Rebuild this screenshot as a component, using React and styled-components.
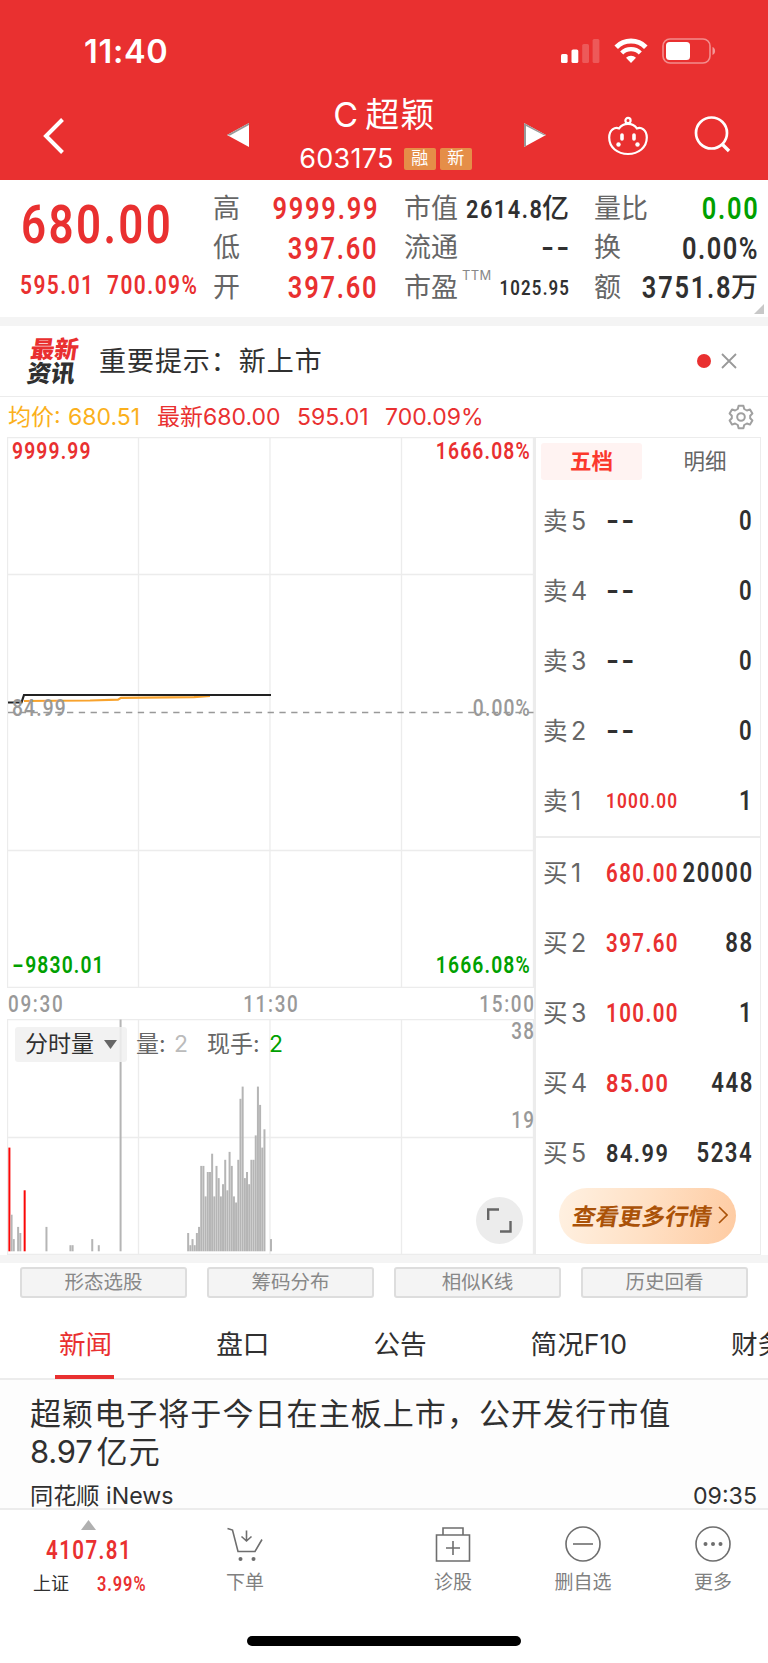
import React from 'react'
import styled, { createGlobalStyle, css } from 'styled-components'

const RED = '#e93030'
const GREEN = '#00a000'
const DARK = '#303030'
const GREY = '#666'
const LINE = '#ececec'

const GlobalStyle = createGlobalStyle`
  * {
    box-sizing: border-box;
  }
  body {
    margin: 0;
    background: #fff;
    font-family: Inter, 'Noto Sans CJK SC', sans-serif;
    color: ${DARK};
  }
`

const Screen = styled.div`
  width: 768px;
  height: 1663px;
  overflow: hidden;
  display: flex;
  flex-direction: column;
  background: #fff;
`

// condensed tabular figures, anchored to whichever side they align to
const Num = styled.span`
  display: inline-block;
  flex: none;
  font-family: Roboto, sans-serif;
  font-weight: ${p => p.$weight || 600};
  font-size: ${p => p.$size}px;
  line-height: 1;
  letter-spacing: ${p => p.$ls === undefined ? 0.07 : p.$ls}em;
  margin-right: ${p => p.$right ? -(p.$ls === undefined ? 0.07 : p.$ls) * 0.82 : 0}em;
  color: ${p => p.$color || DARK};
  white-space: nowrap;
  transform: scaleX(${p => p.$scale || 0.82});
  transform-origin: ${p => p.$right ? 'right' : 'left'} center;
`

const Minus = styled.span`
  display: inline-block;
  transform: scaleX(1.7);
  transform-origin: left center;
  margin-right: 6px;
`

/* header */

const Header = styled.header`
  height: 180px;
  flex: none;
  background: ${RED};
  color: #fff;
`

const StatusBar = styled.div`
  height: 92px;
  padding: 32px 52px 0 84px;
  display: flex;
  justify-content: space-between;
`

const Clock = styled.div`
  font-size: 32.5px;
  line-height: 39px;
  font-weight: 600;
  letter-spacing: 0.7px;
`

const StatusIcons = styled.div`
  display: flex;
  padding-top: 6px;
  gap: 14px;
`

const NavBar = styled.div`
  height: 88px;
  display: grid;
  grid-template-columns: 227px 319px 222px;
`

const NavLeft = styled.div`
  display: flex;
  padding: 26px 0 0 43px;
`

const NavCenter = styled.div`
  display: flex;
  justify-content: space-between;
`

const NavRight = styled.div`
  display: flex;
  padding: 24px 0 0 61px;
  gap: 45px;
`

const Arrow = styled.svg`
  margin-top: 30px;
  flex: none;
`

const Title = styled.div`
  width: 190px;
  text-align: center;
`

const StockName = styled.div`
  padding-top: 1px;
  margin-left: -4px;
  font-size: 34px;
  line-height: 44px;
  letter-spacing: 1.3px;
  word-spacing: -5px;
  white-space: nowrap;
`

const StockCode = styled.div`
  display: flex;
  align-items: center;
  justify-content: center;
  height: 45px;
  margin-top: -1px;
  margin-left: -2px;
  font-size: 27px;
  letter-spacing: 0.3px;
  gap: 4px;
`

const Tag = styled.span`
  width: 32px;
  height: 22px;
  border-radius: 2px;
  background: #e58e48;
  font-size: 17px;
  line-height: 21px;
  text-align: center;
  letter-spacing: 0;
  &:first-of-type {
    margin-left: 6px;
  }
`

/* quote */

const Quote = styled.section`
  position: relative;
  height: 137px;
  flex: none;
  display: flex;
`

const QuoteMain = styled.div`
  width: 192px;
  margin-left: 21px;
  padding-top: 14px;
`

const LastPrice = styled.div`
  height: 62px;
  display: flex;
  align-items: center;
  line-height: 1;
`

const Change = styled.div`
  display: grid;
  grid-template-columns: 87px 1fr;
  height: 60px;
  align-items: center;
  margin-left: -1px;
`

const QuoteCol = styled.div`
  width: ${p => p.$width}px;
  margin-right: ${p => p.$gap}px;
  padding-top: 9px;
`

const QuoteRow = styled.div`
  height: 39.5px;
  display: flex;
  align-items: center;
  justify-content: space-between;
`

const QuoteLabel = styled.span`
  position: relative;
  font-size: 27px;
  line-height: 38px;
  white-space: nowrap;
  color: ${GREY};
  sup {
    position: absolute;
    left: 58px;
    top: -8px;
    font-size: 13px;
    line-height: 29px;
    letter-spacing: 0.3px;
    color: #888;
  }
`

const QuoteValue = styled.span`
  display: flex;
  flex: 1;
  min-width: 0;
  align-items: center;
  justify-content: flex-end;
  height: 38px;
`

const Unit = styled.span`
  font-size: 27px;
  line-height: 38px;
  font-weight: 500;
`

const Dash = styled.span`
  display: inline-block;
  font-family: Roboto, sans-serif;
  font-weight: 700;
  font-size: 27px;
  line-height: 1;
  letter-spacing: 1.6px;
  margin-right: -2px;
  transform: scaleX(1.25);
  transform-origin: ${p => p.$right ? 'right' : 'left'} center;
`

const Corner = styled.svg`
  position: absolute;
  right: 4px;
  bottom: 3px;
`

const Band = styled.div`
  height: ${p => p.$height}px;
  flex: none;
  background: #f4f4f4;
`

/* notice */

const Notice = styled.section`
  height: 71px;
  flex: none;
  display: flex;
  align-items: center;
  padding: 0 31px 0 29px;
  border-bottom: 1px solid ${LINE};
`

const NoticeLogo = styled.div`
  width: 50px;
  font-size: 24px;
  line-height: 23.5px;
  font-weight: 900;
  transform: skewX(-8deg);
  b {
    display: block;
    font-weight: 900;
    color: ${RED};
  }
`

const NoticeText = styled.div`
  flex: 1;
  margin-left: 20px;
  padding-bottom: 4px;
  font-size: 27px;
  letter-spacing: 0.95px;
`

const Dot = styled.span`
  width: 14px;
  height: 14px;
  border-radius: 50%;
  background: ${RED};
  margin-right: 10px;
`

/* chart */

const AvgRow = styled.div`
  height: 40px;
  flex: none;
  display: flex;
  align-items: center;
  padding: 0 14px 0 8px;
  font-size: 23px;
  line-height: 40px;
  color: ${RED};
  white-space: nowrap;
  span {
    width: 140px;
  }
  span:nth-child(1) {
    width: 149px;
    color: #fbb01c;
    word-spacing: 1px;
  }
  span:nth-child(3) {
    width: 88px;
  }
  svg {
    margin-left: auto;
  }
`

const Market = styled.section`
  height: 818px;
  flex: none;
  display: grid;
  grid-template-columns: 527px 227px;
  padding-left: 7px;
`

const PriceChart = styled.div`
  position: relative;
  height: 551px;
  svg {
    display: block;
  }
`

const Axis = styled.div`
  height: 31px;
  display: grid;
  grid-template-columns: 1fr 1fr 1fr;
  align-items: center;
  padding: 2px 0 0 1px;
  > :nth-child(2) {
    justify-self: center;
    transform-origin: center;
  }
  > :nth-child(3) {
    justify-self: end;
  }
`

const VolumeChart = styled.div`
  position: relative;
  height: 236px;
  svg {
    display: block;
  }
`

const Mark = styled.div`
  position: absolute;
  line-height: 1;
  top: ${p => p.$top}px;
  ${p => p.$end !== undefined ? css`right: ${p.$end}px;` : css`left: 5px;`}
`

const VolumeHead = styled.div`
  position: absolute;
  left: 8px;
  top: 8px;
  height: 35px;
  display: flex;
  align-items: center;
  font-size: 23px;
  line-height: 30px;
  color: ${GREY};
  white-space: nowrap;
`

const Picker = styled.div`
  width: 112px;
  height: 35px;
  display: flex;
  align-items: center;
  justify-content: space-between;
  padding: 0 10px 2px 10px;
  margin-right: 9px;
  border-radius: 3px;
  background: rgba(240, 240, 240, 0.86);
  color: ${DARK};
  svg {
    margin-top: 2px;
  }
`

const Reading = styled.span`
  width: ${p => p.$width}px;
  padding-bottom: 2px;
  color: ${p => p.$color || GREY};
`

const Expand = styled.div`
  position: absolute;
  right: 11px;
  bottom: 11px;
  width: 47px;
  height: 47px;
  border-radius: 50%;
  background: #ececec;
  display: grid;
  place-items: center;
`

/* order book */

const Book = styled.div`
  border: 1px solid ${LINE};
  border-left-width: 2px;
  height: 818px;
`

const BookTabs = styled.div`
  height: 48px;
  padding: 5px 2px 6px 5px;
  display: grid;
  grid-template-columns: 101px 1fr;
  column-gap: 10px;
`

const BookTab = styled.div`
  border-radius: 3px;
  text-align: center;
  font-size: 21.5px;
  line-height: 36px;
  font-weight: ${p => p.$active ? 700 : 400};
  color: ${p => p.$active ? '#fb382c' : GREY};
  background: ${p => p.$active ? '#fff3f2' : 'none'};
`

const Side = styled.div`
  ${p => p.$ruled && css`border-bottom: 2px solid ${LINE};`}
`

const BookRow = styled.div`
  height: 70px;
  display: grid;
  grid-template-columns: 28px 35px minmax(0, 1fr) 76px;
  align-items: center;
  padding: 0 8px 0 7px;
  > :last-child {
    justify-self: end;
  }
`

const SideName = styled.span`
  font-size: 24.5px;
  line-height: 36px;
  margin-top: -1px;
  color: ${GREY};
`

const Level = styled.span`
  font-size: 25px;
  color: ${GREY};
`

const MoreQuotes = styled.div`
  width: 177px;
  height: 56px;
  margin: 0 auto 0 23px;
  border-radius: 28px;
  background: linear-gradient(100deg, #fff1e2, #ffe0c4 50%, #fecba2);
  display: flex;
  align-items: center;
  padding: 0 0 2px 14px;
  font-size: 23.2px;
  font-weight: 700;
  color: #aa5208;
  em {
    font-style: normal;
    transform: skewX(-10deg);
    margin-right: 6px;
    white-space: nowrap;
  }
`

/* lower part */

const Tools = styled.div`
  height: 42px;
  flex: none;
  padding: 4px 20px 8px;
  display: grid;
  grid-template-columns: repeat(4, 1fr);
  column-gap: 20px;
`

const Tool = styled.div`
  border: 2px solid #ddd;
  border-radius: 3px;
  background: #f4f4f4;
  text-align: center;
  font-size: 19.5px;
  line-height: 27px;
  color: #888;
`

const Tabs = styled.nav`
  height: 75px;
  flex: none;
  display: flex;
  gap: 104px;
  padding-left: 59px;
  border-bottom: 2px solid ${LINE};
`

const Tab = styled.div`
  position: relative;
  flex: none;
  font-size: 26.6px;
  line-height: 78px;
  height: 73px;
  color: ${p => p.$active ? RED : DARK};
  ${p => p.$active && css`
    &::after {
      content: '';
      position: absolute;
      left: -4px;
      right: -2px;
      bottom: -1px;
      height: 4px;
      background: ${RED};
    }
  `}
`

const News = styled.article`
  height: 128px;
  flex: none;
  padding: 15px 11px 0 30px;
  background: #fdfdfd;
`

const Headline = styled.div`
  font-size: 31px;
  line-height: 38px;
  letter-spacing: 1.07px;
  height: 80px;
  white-space: nowrap;
`

const Amount = styled.span`
  letter-spacing: -0.2px;
  margin-right: 4px;
`

const NewsMeta = styled.div`
  display: flex;
  justify-content: space-between;
  font-size: 23.2px;
  line-height: 44px;
  margin-top: -1px;
  height: 34px;
`

const BottomBar = styled.footer`
  height: 120px;
  flex: none;
  border-top: 2px solid ${LINE};
  background: #fff;
  display: grid;
  grid-template-columns: 177px 136px 75px 130px 130px 130px;
`

const IndexCell = styled.div`
  display: flex;
  flex-direction: column;
  padding-left: 33px;
  padding-top: 10px;
  > svg {
    margin-left: 48px;
  }
`

const IndexValue = styled.div`
  height: 39px;
  padding: 2px 0 0 13px;
  display: flex;
  align-items: center;
`

const IndexName = styled.div`
  display: grid;
  grid-template-columns: 64px auto;
  align-items: center;
  font-size: 18px;
  line-height: 28px;
  margin-top: 1px;
`

const Action = styled.div`
  display: flex;
  flex-direction: column;
  align-items: center;
  padding-top: 16px;
  font-size: 19px;
  line-height: 26px;
  color: #808080;
  svg {
    margin-bottom: 8px;
  }
`

const HomeIndicator = styled.div`
  width: 274px;
  height: 10px;
  margin: 8px auto 0;
  border-radius: 5px;
  background: #000;
`

const sells = [
  { level: 5, qty: 0 },
  { level: 4, qty: 0 },
  { level: 3, qty: 0 },
  { level: 2, qty: 0 },
  { level: 1, price: '1000.00', qty: 1, size: 21 }
]

const buys = [
  { level: 1, price: '680.00', qty: 20000 },
  { level: 2, price: '397.60', qty: 88 },
  { level: 3, price: '100.00', qty: 1 },
  { level: 4, price: '85.00', qty: 448, size: 26.5 },
  { level: 5, price: '84.99', qty: 5234, size: 26.5, color: DARK }
]

// [minute since open, lots]
const volumes = [
  [0, 17], [1, 6], [2, 2], [4, 4], [5, 3], [7, 10], [17, 4], [28, 1], [29, 1], [38, 2], [41, 1], [51, 38],
  [82, 3], [83, 1], [84, 2], [85, 1], [86, 3], [87, 4], [88, 14], [89, 14], [90, 9], [91, 13], [92, 13],
  [93, 16], [94, 9], [95, 14], [96, 12], [97, 9], [98, 11], [99, 15], [100, 10], [101, 16.3], [102, 14],
  [103, 9], [104, 8], [105, 15], [106, 25], [107, 27], [108, 12], [109, 13], [110, 11], [111, 15],
  [112, 15], [113, 19], [114, 27], [115, 24], [116, 17], [117, 20], [120, 2]
]
const risingMinutes = [0, 7]

const Signal = () => (
  <svg width="39" height="25" viewBox="0 0 39 25" fill="#fff">
    <rect x="0" y="16" width="6.6" height="9" rx="1.6" />
    <rect x="10.5" y="11.5" width="6.8" height="13.5" rx="1.6" />
    <rect x="21.2" y="6" width="6.8" height="19" rx="1.6" opacity=".2" />
    <rect x="31.6" y="1" width="6.8" height="24" rx="1.6" opacity=".2" />
  </svg>
)

const Wifi = () => (
  <svg width="34" height="25" viewBox="0 0 34 25" fill="none" stroke="#fff">
    <path d="M2.2 9.2a21 21 0 0 1 29.6 0" strokeWidth="5" />
    <path d="M7.7 15a13.2 13.2 0 0 1 18.6 0" strokeWidth="4.4" />
    <path d="M17 25l-5-5.2a7.2 7.2 0 0 1 10 0z" fill="#fff" stroke="none" />
  </svg>
)

const Battery = () => (
  <svg width="54" height="26" viewBox="0 0 54 26" fill="none">
    <rect x="1" y="1" width="47" height="24" rx="7" stroke="#fff" strokeWidth="1.6" opacity=".45" />
    <rect x="4" y="4" width="24" height="18" rx="3.5" fill="#fff" />
    <path d="M50.5 9v8c1.6-.6 2.6-2.2 2.6-4s-1-3.4-2.6-4z" fill="#fff" opacity=".5" />
  </svg>
)

const Robot = () => (
  <svg width="42" height="40" viewBox="0 0 42 40" fill="none" stroke="#fff" strokeWidth="2.2">
    <circle cx="21" cy="4.5" r="2.6" />
    <path d="M21 7.8c-3.6 0-6.800 1.600-8.900 4.600C8 10.600 2.200 13.500 2.200 21.600 2.200 31.500 10.500 38 21 38s18.800-6.500 18.800-16.400c0-8.100-5.800-11-9.900-9.200C27.800 9.400 24.600 7.800 21 7.800z" />
    <path d="M15 19v4M27 19v4" strokeWidth="3.6" strokeLinecap="round" />
    <circle cx="11.500" cy="28.5" r="2.2" fill="#fff" stroke="none" />
    <circle cx="30.500" cy="28.5" r="2.2" fill="#fff" stroke="none" />
  </svg>
)

const Search = () => (
  <svg width="37" height="38" viewBox="0 0 37 38" fill="none" stroke="#fff" strokeWidth="2.7">
    <circle cx="17.5" cy="17" r="15.5" />
    <path d="M28 28l7 7" strokeWidth="3.4" />
  </svg>
)

const Gear = () => (
  <svg width="26" height="26" viewBox="0 0 26 26" fill="none" stroke="#a0a0a0" strokeWidth="2" strokeLinejoin="round">
    <path d="M10.6 1.700h4.800l.8 3.300 2.700 1.500 3.100-1.100 2.400 4.100-2.200 2.200v2.600l2.200 2.200-2.400 4.100-3.100-1.100-2.700 1.500-.8 3.300h-4.800l-.8-3.300-2.700-1.500-3.100 1.100-2.400-4.100 2.200-2.200v-2.600l-2.200-2.200 2.400-4.100 3.100 1.100 2.700-1.500z" />
    <circle cx="13" cy="13" r="3.8" />
  </svg>
)

const grid = [0.5, 131.5, 263, 394.5, 526.5]

const PriceLines = () => (
  <svg width="527" height="551" viewBox="0 0 527 551" fill="none">
    <g stroke={LINE} strokeWidth="1.3">
      {grid.map(x => <path key={x} d={`M${x} 0V551`} />)}
      {[0.5, 137.5, 413.5, 550.3].map(y => <path key={y} d={`M0 ${y}H527`} />)}
    </g>
    <path d="M1 275.500H527" stroke="#999" strokeWidth="1.3" strokeDasharray="6.3 5.5" />
    <path d="M17 264l66-.5 28-.9 3-1.800 73-.6 16-1.200" stroke="#f8a32e" strokeWidth="2.2" />
    <path d="M1 265.500h13.500l2.500-7.500h247" stroke="#222" strokeWidth="2.2" />
  </svg>
)

const VolumeBars = () => (
  <svg width="527" height="236" viewBox="0 0 527 236" fill="none">
    <g stroke={LINE} strokeWidth="1.3">
      {grid.map(x => <path key={x} d={`M${x} 0V236`} />)}
      {[0.5, 118.5, 235.3].map(y => <path key={y} d={`M0 ${y}H527`} />)}
    </g>
    {volumes.map(([minute, lots]) => (
      <rect
        key={minute}
        x={1.4 + minute * 2.18}
        y={232.3 - lots * 6.1}
        width="2"
        height={lots * 6.1}
        fill={risingMinutes.includes(minute) ? '#fa0808' : '#b5b5b5'}
      />
    ))}
  </svg>
)

const BookLine = ({ side, level, price, qty, size = 25, color = RED }) => (
  <BookRow>
    <SideName>{side}</SideName>
    <Level>{level}</Level>
    {price
      ? <Num $size={size} $color={color}>{price}</Num>
      : <Dash>--</Dash>}
    <Num $size={27} $right>{qty}</Num>
  </BookRow>
)

const App = () => (
  <Screen>
    <GlobalStyle />
    <Header>
      <StatusBar>
        <Clock>11:40</Clock>
        <StatusIcons>
          <Signal />
          <Wifi />
          <Battery />
        </StatusIcons>
      </StatusBar>
      <NavBar>
        <NavLeft>
          <svg width="22" height="36" viewBox="0 0 22 36" fill="none" stroke="#fff" strokeWidth="4">
            <path d="M19.500 1.500L3 18l16.500 16.500" />
          </svg>
        </NavLeft>
        <NavCenter>
          <Arrow width="23" height="26" viewBox="0 0 23 26">
            <path d="M0 13L22 1v24z" fill="#fff" />
            <path d="M0 13L22 1v2L3 13.500z" fill="#999" />
          </Arrow>
          <Title>
            <StockName>C 超颖</StockName>
            <StockCode>
              603175
              <Tag>融</Tag>
              <Tag>新</Tag>
            </StockCode>
          </Title>
          <Arrow width="23" height="26" viewBox="0 0 23 26">
            <path d="M1 1l22 12L1 25z" fill="#fff" />
            <path d="M1 1l22 12-2 .3L3 4v20l-2 1z" fill="#999" />
          </Arrow>
        </NavCenter>
        <NavRight>
          <Robot />
          <Search />
        </NavRight>
      </NavBar>
    </Header>

    <Quote>
      <QuoteMain>
        <LastPrice>
          <Num $size={53.5} $color={RED} $ls={0.055}>680.00</Num>
        </LastPrice>
        <Change>
          <Num $size={25.5} $color={RED}>595.01</Num>
          <Num $size={25.5} $color={RED}>700.09%</Num>
        </Change>
      </QuoteMain>
      <QuoteCol $width={164} $gap={27}>
        <QuoteRow><QuoteLabel>高</QuoteLabel><Num $size={31} $color={RED} $right>9999.99</Num></QuoteRow>
        <QuoteRow><QuoteLabel>低</QuoteLabel><Num $size={31} $color={RED} $right>397.60</Num></QuoteRow>
        <QuoteRow><QuoteLabel>开</QuoteLabel><Num $size={31} $color={RED} $right>397.60</Num></QuoteRow>
      </QuoteCol>
      <QuoteCol $width={165} $gap={25}>
        <QuoteRow>
          <QuoteLabel>市值</QuoteLabel>
          <QuoteValue><Num $size={26.5} $right>2614.8</Num><Unit>亿</Unit></QuoteValue>
        </QuoteRow>
        <QuoteRow><QuoteLabel>流通</QuoteLabel><Dash $right>--</Dash></QuoteRow>
        <QuoteRow>
          <QuoteLabel>市盈<sup>TTM</sup></QuoteLabel>
          <Num $size={20.5} $right>1025.95</Num>
        </QuoteRow>
      </QuoteCol>
      <QuoteCol $width={164} $gap={0}>
        <QuoteRow><QuoteLabel>量比</QuoteLabel><Num $size={31} $color={GREEN} $right>0.00</Num></QuoteRow>
        <QuoteRow><QuoteLabel>换</QuoteLabel><Num $size={31} $ls={0.06} $right>0.00%</Num></QuoteRow>
        <QuoteRow>
          <QuoteLabel>额</QuoteLabel>
          <QuoteValue><Num $size={31} $right>3751.8</Num><Unit>万</Unit></QuoteValue>
        </QuoteRow>
      </QuoteCol>
      <Corner width="10" height="10" viewBox="0 0 10 10"><path d="M10 0v10H0z" fill="#c8c8c8" /></Corner>
    </Quote>
    <Band $height={9} />

    <Notice>
      <NoticeLogo><b>最新</b>资讯</NoticeLogo>
      <NoticeText>重要提示：新上市</NoticeText>
      <Dot />
      <svg width="16" height="16" viewBox="0 0 16 16" stroke="#999" strokeWidth="1.8">
        <path d="M1 1l14 14M15 1L1 15" />
      </svg>
    </Notice>

    <AvgRow>
      <span>均价: 680.51</span>
      <span>最新680.00</span>
      <span>595.01</span>
      <span>700.09%</span>
      <Gear />
    </AvgRow>

    <Market>
      <div>
        <PriceChart>
          <PriceLines />
          <Mark $top={3}><Num $size={23.5} $color={RED} $ls={0.06}>9999.99</Num></Mark>
          <Mark $top={3} $end={4}><Num $size={23.5} $color={RED} $ls={0.06} $right>1666.08%</Num></Mark>
          <Mark $top={260}><Num $size={23.5} $color="#999" $weight={500} $ls={0.06}>84.99</Num></Mark>
          <Mark $top={260} $end={4}><Num $size={23.5} $color="#999" $weight={500} $ls={0.06} $right>0.00%</Num></Mark>
          <Mark $top={517}><Num $size={23.5} $color={GREEN} $ls={0.06}><Minus>-</Minus>9830.01</Num></Mark>
          <Mark $top={517} $end={4}><Num $size={23.5} $color={GREEN} $ls={0.06} $right>1666.08%</Num></Mark>
        </PriceChart>
        <Axis>
          <Num $size={23} $color="#999" $weight={500} $ls={0.09}>09:30</Num>
          <Num $size={23} $color="#999" $weight={500} $ls={0.09}>11:30</Num>
          <Num $size={23} $color="#999" $weight={500} $ls={0.09} $right>15:00</Num>
        </Axis>
        <VolumeChart>
          <VolumeBars />
          <Mark $top={1} $end={0}><Num $size={23} $color="#999" $weight={500} $right>38</Num></Mark>
          <Mark $top={90} $end={0}><Num $size={23} $color="#999" $weight={500} $right>19</Num></Mark>
          <VolumeHead>
            <Picker>
              分时量
              <svg width="13" height="9" viewBox="0 0 13 9"><path d="M0 0h13L6.500 9z" fill="#666" /></svg>
            </Picker>
            <Reading $width={38}>量:</Reading>
            <Reading $width={33} $color="#bbb">2</Reading>
            <Reading $width={62}>现手:</Reading>
            <Reading $color={GREEN}>2</Reading>
          </VolumeHead>
          <Expand>
            <svg width="25" height="25" viewBox="0 0 25 25" fill="none" stroke="#666" strokeWidth="2.4">
              <path d="M1.200 12V1.500H12M13 23.500h10.500V13" />
            </svg>
          </Expand>
        </VolumeChart>
      </div>
      <Book>
        <BookTabs>
          <BookTab $active>五档</BookTab>
          <BookTab>明细</BookTab>
        </BookTabs>
        <Side $ruled>
          {sells.map(row => <BookLine key={row.level} side="卖" {...row} />)}
        </Side>
        <Side>
          {buys.map(row => <BookLine key={row.level} side="买" {...row} />)}
        </Side>
        <MoreQuotes>
          <em>查看更多行情</em>
          <svg width="10" height="18" viewBox="0 0 10 18" fill="none" stroke="#aa5208" strokeWidth="1.6">
            <path d="M1 1l8 8-8 8" />
          </svg>
        </MoreQuotes>
      </Book>
    </Market>
    <Band $height={8} />

    <Tools>
      <Tool>形态选股</Tool>
      <Tool>筹码分布</Tool>
      <Tool>相似K线</Tool>
      <Tool>历史回看</Tool>
    </Tools>
    <Tabs>
      <Tab $active>新闻</Tab>
      <Tab>盘口</Tab>
      <Tab>公告</Tab>
      <Tab>简况F10</Tab>
      <Tab>财务</Tab>
    </Tabs>
    <News>
      <Headline>
        超颖电子将于今日在主板上市，公开发行市值<br />
        <Amount>8.97</Amount>亿元
      </Headline>
      <NewsMeta>
        <span>同花顺 iNews</span>
        <span>09:35</span>
      </NewsMeta>
    </News>

    <BottomBar>
      <IndexCell>
        <svg width="15" height="10" viewBox="0 0 15 10"><path d="M7.500 0L15 10H0z" fill="#b0b0b0" /></svg>
        <IndexValue><Num $size={25}$color={RED}>4107.81</Num></IndexValue>
        <IndexName>上证<Num $size={20} $color={RED} $ls={0.055}>3.99%</Num></IndexName>
      </IndexCell>
      <Action>
        <svg width="36" height="36" viewBox="0 0 36 36" fill="none" stroke="#6e6e6e" strokeWidth="1.6">
          <path d="M.5 2.500l5 1.600 5.500 21.400h17l7-12M19.500 4.500v10M14.500 10.500l5 4.500 5-4.500" />
          <circle cx="13.500" cy="33" r="2" fill="#6e6e6e" stroke="none" />
          <circle cx="26.500" cy="33" r="2" fill="#6e6e6e" stroke="none" />
        </svg>
        下单
      </Action>
      <span />
      <Action>
        <svg width="36" height="36" viewBox="0 0 36 36" fill="none" stroke="#6e6e6e" strokeWidth="1.6">
          <path d="M1.500 9h33v26h-33zM8 9V2h20v7M18 15v14M11 22h14" />
        </svg>
        诊股
      </Action>
      <Action>
        <svg width="36" height="36" viewBox="0 0 36 36" fill="none" stroke="#6e6e6e" strokeWidth="1.6">
          <circle cx="18" cy="18" r="17" />
          <path d="M8 18h20" />
        </svg>
        删自选
      </Action>
      <Action>
        <svg width="36" height="36" viewBox="0 0 36 36" fill="none" stroke="#6e6e6e" strokeWidth="1.6">
          <circle cx="18" cy="18" r="17" />
          <g fill="#6e6e6e" stroke="none">
            <circle cx="10.500" cy="18" r="2" />
            <circle cx="18" cy="18" r="2" />
            <circle cx="25.500" cy="18" r="2" />
          </g>
        </svg>
        更多
      </Action>
    </BottomBar>
    <HomeIndicator />
  </Screen>
)

export default App
